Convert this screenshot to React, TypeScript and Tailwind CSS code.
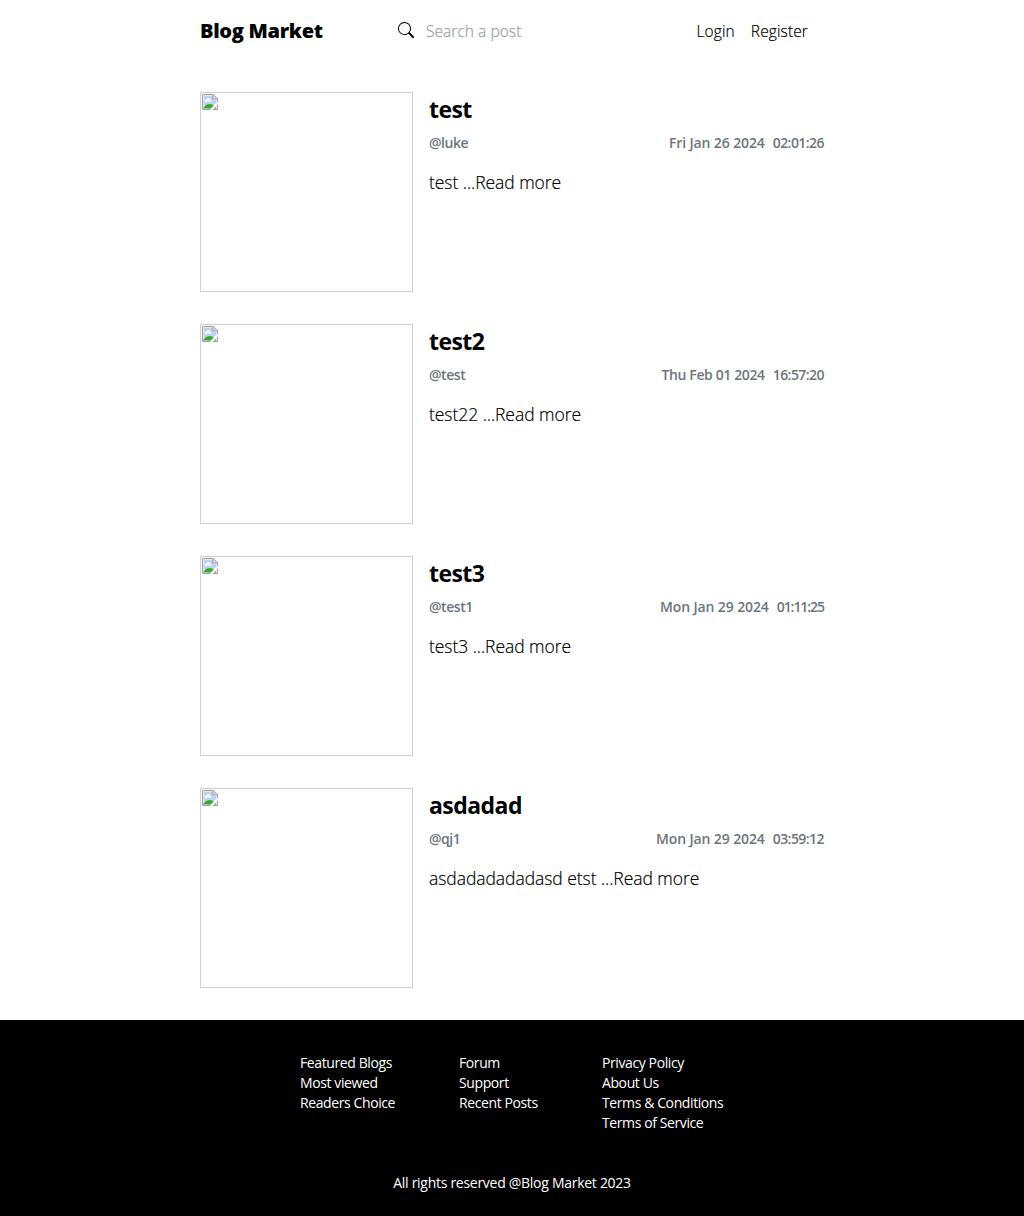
import { BsSearch } from "react-icons/bs";

const posts = [
  { title: "test", author: "@luke", date: "Fri Jan 26 2024", time: "02:01:26", text: "test", dateClass: "tracking-[-0.12px]", timeClass: "tracking-[-0.55px]" },
  { title: "test2", author: "@test", date: "Thu Feb 01 2024", time: "16:57:20", text: "test22", dateClass: "tracking-[-0.38px]", timeClass: "tracking-[-0.55px]" },
  { title: "test3", author: "@test1", date: "Mon Jan 29 2024", time: "01:11:25", text: "test3", dateClass: "tracking-[-0.12px]", timeClass: "tracking-[-1.05px]" },
  { title: "asdadad", author: "@qj1", date: "Mon Jan 29 2024", time: "03:59:12", text: "asdadadadadasd etst", dateClass: "tracking-[-0.12px]", timeClass: "tracking-[-0.55px]" },
];

const footerColumns = [
  ["Featured Blogs", "Most viewed", "Readers Choice"],
  ["Forum", "Support", "Recent Posts"],
  ["Privacy Policy", "About Us", "Terms & Conditions", "Terms of Service"],
];

function MissingImage() {
  return (
    <div className="h-[200px] w-[213px] shrink-0 border border-[#d0d0d0] p-px">
      <svg width="16" height="16" viewBox="0 0 16 16">
        <path d="M.5 .5H11L15.500 5V15.500H.5z" fill="#fff" stroke="#a0a0a0" />
        <path d="M1.500 1.500H11V5.500H14.500V14.500H1.500z" fill="#bfd1f6" />
        <path d="M3 7.500C2.500 5.500 4 5 4.800 5.300C5.300 3.500 7.600 3.800 7.800 5.500C9.500 5.500 9.500 7.500 8.500 7.500z" fill="#fff" />
        <path d="M1.500 14.500V13.500C4.500 9.300 8.500 9.300 11 11L14.500 14.500z" fill="#3faa28" />
        <path d="M11 .5V5H15.500z" fill="#e8e8e8" stroke="#a0a0a0" />
        <path d="M16 7.500V10L10.500 16H8L11 12z" fill="#fff" />
      </svg>
    </div>
  );
}

export default function App() {
  return (
    <div className="min-h-[1216px] bg-white font-['Open_Sans',sans-serif] text-black">
      <header className="mx-auto flex h-[60px] w-[624px] items-center">
        <h1 className="mt-0.5 w-[190px] text-[20px] leading-7 font-extrabold whitespace-nowrap">
          <span className="tracking-[-0.3px]">Blog Market</span>
        </h1>
        <div className="flex items-center pl-2">
          <BsSearch size={16} />
          <input
            className="mt-0.5 ml-3 w-[200px] text-[15.5px] leading-6 font-light tracking-[0.05px] outline-none [-webkit-text-stroke:0.25px] placeholder:text-gray-400"
            placeholder="Search a post"
          />
        </div>
        <nav className="mt-0.5 mr-4 ml-auto flex gap-4 text-[15.5px] leading-6 font-light tracking-[0.12px] [-webkit-text-stroke:0.2px]">
          <a>Login</a>
          <a>Register</a>
        </nav>
      </header>
      <main className="mx-auto flex w-[624px] flex-col gap-8 py-8">
        {posts.map((p) => (
          <article key={p.title} className="flex gap-4">
            <MissingImage />
            <div className="min-w-0 flex-1">
              <h2 className="pt-px text-[23px] leading-8 font-bold tracking-[-0.55px]">{p.title}</h2>
              <div className="mt-2 flex justify-between text-[14px] leading-5 font-semibold text-[#6c757d]">
                <span className="tracking-[-0.45px]">{p.author}</span>
                <span className="flex gap-2">
                  <span className={p.dateClass}>{p.date}</span>
                  <span className={p.timeClass}>{p.time}</span>
                </span>
              </div>
              <p className="mt-[15px] text-[17.5px] leading-7 font-light tracking-[-0.05px] whitespace-nowrap [-webkit-text-stroke:0.2px]">
                {p.text} ...Read more
              </p>
            </div>
          </article>
        ))}
      </main>
      <footer className="h-[196px] bg-black pt-[33px] text-[14px] leading-5 tracking-[-0.4px] text-white">
        <div className="ml-[300px] flex">
          {footerColumns.map((col, i) => (
            <ul key={col[0]} className={i === 0 ? "w-[159px]" : i === 1 ? "w-[143px]" : "w-[200px]"}>
              {col.map((t) => (
                <li key={t}>{t}</li>
              ))}
            </ul>
          ))}
        </div>
        <p className="mt-10 text-center tracking-[-0.28px]">All rights reserved @Blog Market 2023</p>
      </footer>
    </div>
  );
}
